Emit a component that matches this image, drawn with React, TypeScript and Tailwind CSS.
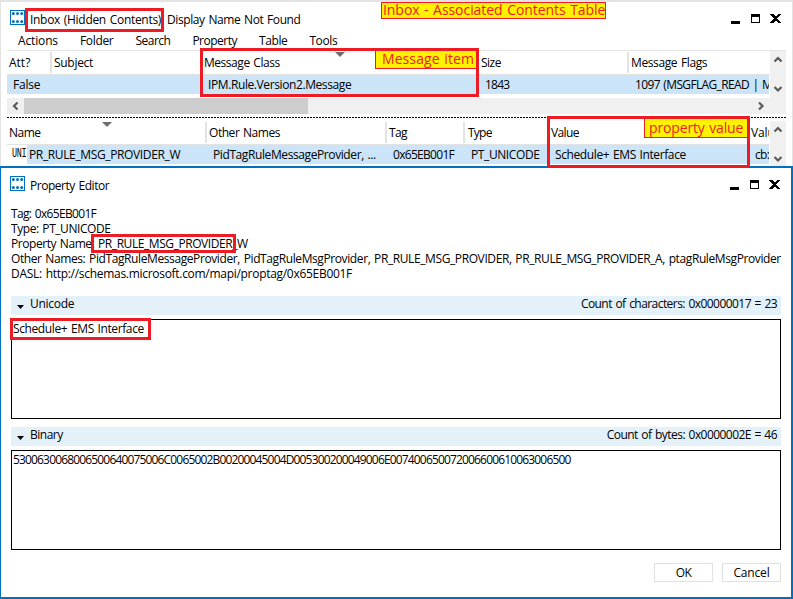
import { useLayoutEffect, useRef, useState } from "react";
import type { ReactNode } from "react";

// One line of UI text, tracked so that it spans `w` pixels.
function T({ w, children, className = "" }: { w: number; children: string; className?: string }) {
  const ref = useRef<HTMLSpanElement>(null);
  const [sp, setSp] = useState(0);
  useLayoutEffect(() => {
    const el = ref.current;
    if (!el) return;
    el.style.letterSpacing = "0px";
    const natural = el.offsetWidth;
    const next = (w - natural) / children.length;
    el.style.letterSpacing = `${next}px`;
    setSp(next);
  }, [w, children]);
  return (
    <span ref={ref} className={`inline-block shrink-0 whitespace-pre [word-spacing:1px] ${className}`} style={{ letterSpacing: `${sp}px` }}>
      {children}
    </span>
  );
}

function AppIcon() {
  return (
    <svg className="block h-[15px] w-[15px] shrink-0" viewBox="0 0 15 15">
      <rect x="0.5" y="0.5" width="14" height="14" fill="#fff" stroke="#0070c0" />
      {[3.3, 7.5, 11.7].map((x) => (
        <g key={x} fill="#0070c0">
          <circle cx={x} cy="3.5" r="1.5" />
          <circle cx={x} cy="11.5" r="1.5" />
        </g>
      ))}
    </svg>
  );
}

function WindowButtons() {
  return (
    <svg className="block h-[10px] w-[50px] shrink-0" viewBox="0 0 50 10" shapeRendering="crispEdges">
      <rect x="0" y="7" width="9" height="3" />
      <path d="M20 0h9v9h-9zM21 3v5h7v-5z" fillRule="evenodd" />
      <path d="M39 0h3l2.500 2.500 2.500-2.500h3l-4 4.500 4 4.500h-3l-2.500-2.500-2.500 2.500h-3l4-4.500z" />
    </svg>
  );
}

function Chevron({ dir }: { dir: "up" | "down" | "left" | "right" }) {
  const d = {
    up: "M1.500 6.500l3.500-3.500 3.500 3.500",
    down: "M1.500 3l3.500 3.500 3.500-3.500",
    left: "M6.500 1.500L3 5l3.500 3.500",
    right: "M3 1.500l3.500 3.500-3.500 3.500",
  }[dir];
  return (
    <svg className="block h-[10px] w-[10px] shrink-0" viewBox="0 0 10 10">
      <path d={d} fill="none" stroke="#5a5a5a" strokeWidth="2.200" />
    </svg>
  );
}

function SortArrow({ className }: { className: string }) {
  return (
    <svg className={`absolute h-[5px] w-[10px] ${className}`} viewBox="0 0 10 5">
      <path d="M0 0h10l-5 5z" fill="#6d6d6d" />
    </svg>
  );
}

function Head({ width, children, sep = true }: { width: string; children?: ReactNode; sep?: boolean }) {
  return (
    <div className={`relative flex h-[21px] shrink-0 items-center overflow-hidden ${width} ${sep ? "border-r-2 border-[#e3e3e3]" : ""}`}>
      {children}
    </div>
  );
}

function Cell({ width, children }: { width: string; children?: ReactNode }) {
  return <div className={`flex shrink-0 items-center overflow-hidden ${width}`}>{children}</div>;
}

function Section({ title, tw, info, iw, children }: { title: string; tw: number; info: string; iw: number; children?: ReactNode }) {
  return (
    <section className="mb-2">
      <div className="mb-1 flex h-[19px] items-center bg-[#e5f1f9] pr-[4px] pl-[6px]">
        <svg className="mt-[2px] mr-[6px] block h-[4px] w-[7px]" viewBox="0 0 7 4">
          <path d="M0 0h7l-3.500 4z" />
        </svg>
        <T w={tw} className="-mt-[4px]">{title}</T>
        <T w={iw} className="-mt-[4px] ml-auto">{info}</T>
      </div>
      <div className="h-[100px] border border-black pl-[1px]">{children}</div>
    </section>
  );
}

function Frame({ className }: { className: string }) {
  return <div className={`absolute border-3 border-[#ed1c24] ${className}`} />;
}

function Note({ className, w, children }: { className: string; w: number; children: string }) {
  return (
    <div className={`absolute flex items-center border border-[#ed1c24] bg-[#fff200] text-[14px] leading-none text-[#ed1c24] ${className}`}>
      <T w={w} className="-mt-px">{children}</T>
    </div>
  );
}

export default function App() {
  return (
    <div className="relative flex h-[599px] w-[793px] flex-col overflow-hidden bg-white font-['Open_Sans','Noto_Sans',sans-serif] text-[12px] leading-[15px] text-black">
      <div className="h-[166px] shrink-0 border-t-2 border-r border-l border-[#e3e3e3] pr-[6px] pl-[6px]">
        <header className="flex h-[30px] items-center pl-[3px]">
          <AppIcon />
          <T w={131} className="mt-[4px] ml-[5px]">Inbox (Hidden Contents)</T>
          <T w={133} className="mt-[4px] ml-[6px]">Display Name Not Found</T>
          <div className="mt-[4px] mr-[5px] ml-auto"><WindowButtons /></div>
        </header>
        <nav className="-mt-px mb-px flex h-[18px] items-center pl-[11px]">
          <T w={40} className="mr-[22px]">Actions</T>
          <T w={33} className="mr-[22px]">Folder</T>
          <T w={35} className="mr-[22px]">Search</T>
          <T w={45} className="mr-[22px]">Property</T>
          <T w={28} className="mr-[22px]">Table</T>
          <T w={28}>Tools</T>
        </nav>
        <div className="flex h-[64px] border-t border-[#e3e3e3]">
          <div className="w-[763px] shrink-0">
            <div className="flex h-[24px] border-b border-[#e3e3e3] pt-[1px]">
              <Head width="w-[45px]"><T w={21} className="ml-[2px]">Att?</T></Head>
              <Head width="w-[150px]"><T w={39} className="ml-[2px]">Subject</T></Head>
              <Head width="w-[277px]">
                <T w={76} className="ml-[2px]">Message Class</T>
                <SortArrow className="top-0 left-[133px]" />
              </Head>
              <Head width="w-[150px]"><T w={20} className="ml-[2px]">Size</T></Head>
              <Head width="w-[141px]" sep={false}><T w={76} className="ml-[2px]">Message Flags</T></Head>
            </div>
            <div className="flex h-[19px] w-[762px] overflow-hidden bg-[#cce4f7]">
              <Cell width="w-[195px]"><T w={27} className="ml-[6px]">False</T></Cell>
              <Cell width="w-[277px]"><T w={143} className="ml-[6px]">IPM.Rule.Version2.Message</T></Cell>
              <Cell width="w-[150px]"><T w={24} className="ml-[6px]">1843</T></Cell>
              <Cell width="w-[140px]"><T w={177} className="ml-[6px]">1097 (MSGFLAG_READ | MSGFLAG</T></Cell>
            </div>
            <div className="mt-[4px] flex h-[16px] items-center bg-[#f0f0f0]">
              <div className="flex w-[17px] justify-center"><Chevron dir="left" /></div>
              <div className="h-full w-[284px] bg-[#cdcdcd]" />
              <div className="mr-[4px] ml-auto"><Chevron dir="right" /></div>
            </div>
          </div>
          <div className="flex w-[16px] flex-col items-center bg-[#f0f0f0] pt-[4px]">
            <Chevron dir="up" />
            <div className="mt-[19px]"><Chevron dir="down" /></div>
          </div>
        </div>
        <div className="mt-[3px] h-px bg-[repeating-linear-gradient(90deg,#000_0_2px,#fff_2px_3px)]" />
        <div className="mt-[3px] flex h-[45px]">
          <div className="w-[763px] shrink-0">
            <div className="flex h-[24px] border-b border-[#e3e3e3] pt-[1px]">
              <Head width="w-[200px]">
                <T w={32} className="ml-[2px]">Name</T>
                <SortArrow className="top-0 left-[95px]" />
              </Head>
              <Head width="w-[180px]"><T w={71} className="ml-[2px]">Other Names</T></Head>
              <Head width="w-[78px]"><T w={18} className="ml-[2px]">Tag</T></Head>
              <Head width="w-[84px]"><T w={24} className="ml-[3px]">Type</T></Head>
              <Head width="w-[200px]"><T w={28} className="ml-[2px]">Value</T></Head>
              <Head width="w-[20px]" sep={false}><T w={85} className="ml-[2px]">Value Alternate</T></Head>
            </div>
            <div className="flex h-[19px] w-[762px] overflow-hidden">
              <Cell width="w-[20px]">
                <T w={21} className="ml-[5px] origin-left scale-x-70 font-['Liberation_Mono',monospace]">UNI</T>
              </Cell>
              <div className="flex w-[742px] overflow-hidden bg-[#cce4f7]">
                <Cell width="w-[180px]"><T w={151} className="ml-[2px]">PR_RULE_MSG_PROVIDER_W</T></Cell>
                <Cell width="w-[180px]"><T w={163} className="ml-[6px]">PidTagRuleMessageProvider, ...</T></Cell>
                <Cell width="w-[78px]"><T w={61} className="ml-[6px]">0x65EB001F</T></Cell>
                <Cell width="w-[84px]"><T w={69} className="ml-[6px]">PT_UNICODE</T></Cell>
                <Cell width="w-[200px]"><T w={131} className="ml-[6px]">Schedule+ EMS Interface</T></Cell>
                <Cell width="w-[20px]"><T w={30} className="ml-[6px]">cb: 46</T></Cell>
              </div>
            </div>
          </div>
          <div className="flex w-[16px] flex-col items-center bg-[#f0f0f0] pt-[4px]">
            <Chevron dir="up" />
            <div className="mt-[19px]"><Chevron dir="down" /></div>
          </div>
        </div>
      </div>

      <main className="flex flex-1 flex-col border-2 border-l border-[#0070c0] pr-[10px] pl-[10px]">
        <header className="-ml-px flex h-[38px] items-start pt-[8px]">
          <AppIcon />
          <T w={79} className="mt-[2px] ml-[5px]">Property Editor</T>
          <div className="mt-[4px] mr-[1px] ml-auto"><WindowButtons /></div>
        </header>
        <div className="flex h-[90px] flex-col items-start">
          <T w={85}>Tag: 0x65EB001F</T>
          <T w={99}>Type: PT_UNICODE</T>
          <T w={237}>Property Name: PR_RULE_MSG_PROVIDER_W</T>
          <T w={770}>Other Names: PidTagRuleMessageProvider, PidTagRuleMsgProvider, PR_RULE_MSG_PROVIDER, PR_RULE_MSG_PROVIDER_A, ptagRuleMsgProvider</T>
          <T w={341}>DASL: http://schemas.microsoft.com/mapi/proptag/0x65EB001F</T>
        </div>
        <Section title="Unicode" tw={44} info="Count of characters: 0x00000017 = 23" iw={196}>
          <T w={131} className="mt-[1px]">Schedule+ EMS Interface</T>
        </Section>
        <Section title="Binary" tw={33} info="Count of bytes: 0x0000002E = 46" iw={170}>
          <T w={557} className="mt-[1px]">5300630068006500640075006C0065002B00200045004D005300200049006E007400650072006600610063006500</T>
        </Section>
        <footer className="mt-[5px] flex justify-end gap-[9px]">
          <button className="flex h-[19px] w-[59px] items-center justify-center border border-[#e1e1e1]"><T w={16}>OK</T></button>
          <button className="flex h-[19px] w-[59px] items-center justify-center border border-[#e1e1e1]"><T w={36}>Cancel</T></button>
        </footer>
      </main>

      <Frame className="top-[8px] left-[25px] h-[24px] w-[139px]" />
      <Frame className="top-[48px] left-[200px] h-[49px] w-[279px]" />
      <Frame className="top-[116px] left-[547px] h-[52px] w-[203px]" />
      <Frame className="top-[234px] left-[91px] h-[19px] w-[145px]" />
      <Frame className="top-[318px] left-[10px] h-[22px] w-[141px]" />
      <Note w={222} className="top-[2px] left-[381px] h-[17px] w-[225px] pl-[1px]">Inbox - Associated Contents Table</Note>
      <Note w={92} className="top-[50px] left-[375px] h-[19px] w-[102px] pl-[6px]">Message item</Note>
      <Note w={94} className="top-[118px] left-[644px] h-[20px] w-[104px] pl-[4px]">property value</Note>
    </div>
  );
}
